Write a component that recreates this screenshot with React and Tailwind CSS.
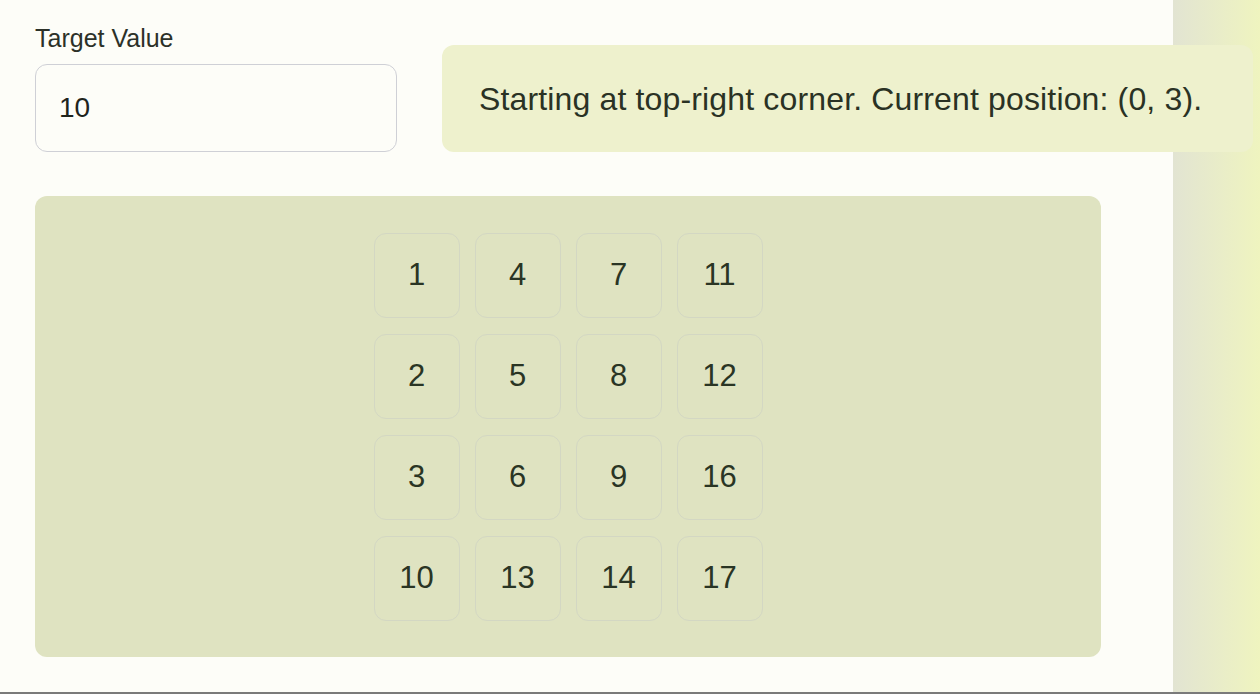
import React from "react";

const rows = [
  [1, 4, 7, 11],
  [2, 5, 8, 12],
  [3, 6, 9, 16],
  [10, 13, 14, 17],
];

export default function App() {
  return (
    <div
      className="flex w-[1260px] h-[694px] overflow-hidden border-b-2 border-[#7a7a7a]"
      style={{ fontFamily: '"Liberation Sans", Arial, sans-serif' }}
    >
      <div className="relative z-10 w-[1173px] shrink-0 bg-[#fdfdf8] pl-[35px] pt-[20px]">
        <div className="flex items-end">
          <div className="flex w-[362px] shrink-0 flex-col">
            <label className="text-[25px] leading-[36px] text-[#2c3129]">Target Value</label>
            <div className="mt-[8px] flex h-[88px] items-center rounded-[12px] border border-[#cfd0d6] bg-[#fdfdf8] pl-[23px] text-[28px] text-[#1f241d]">
              10
            </div>
          </div>
          <div className="ml-[45px] flex h-[107px] w-[811px] shrink-0 items-center rounded-[12px] bg-[#eef1cd] pl-[37px] text-[32px] tracking-[0.15px] text-[#2a3224]">
            Starting at top-right corner. Current position: (0, 3).
          </div>
        </div>
        <div className="mt-[44px] flex h-[461px] w-[1066px] items-center justify-center rounded-[12px] bg-[#dfe3c1]">
          <div className="grid grid-cols-[repeat(4,86px)] grid-rows-[repeat(4,85px)] gap-x-[15px] gap-y-[16px]">
            {rows.flat().map((n) => (
              <div
                key={n}
                className="flex items-center justify-center rounded-[12px] border border-[#d3d7c3] text-[31px] text-[#2a3524]"
              >
                {n}
              </div>
            ))}
          </div>
        </div>
      </div>
      <div className="flex-1 bg-gradient-to-r from-[#e2e4d2] to-[#eff4bf]" />
    </div>
  );
}
